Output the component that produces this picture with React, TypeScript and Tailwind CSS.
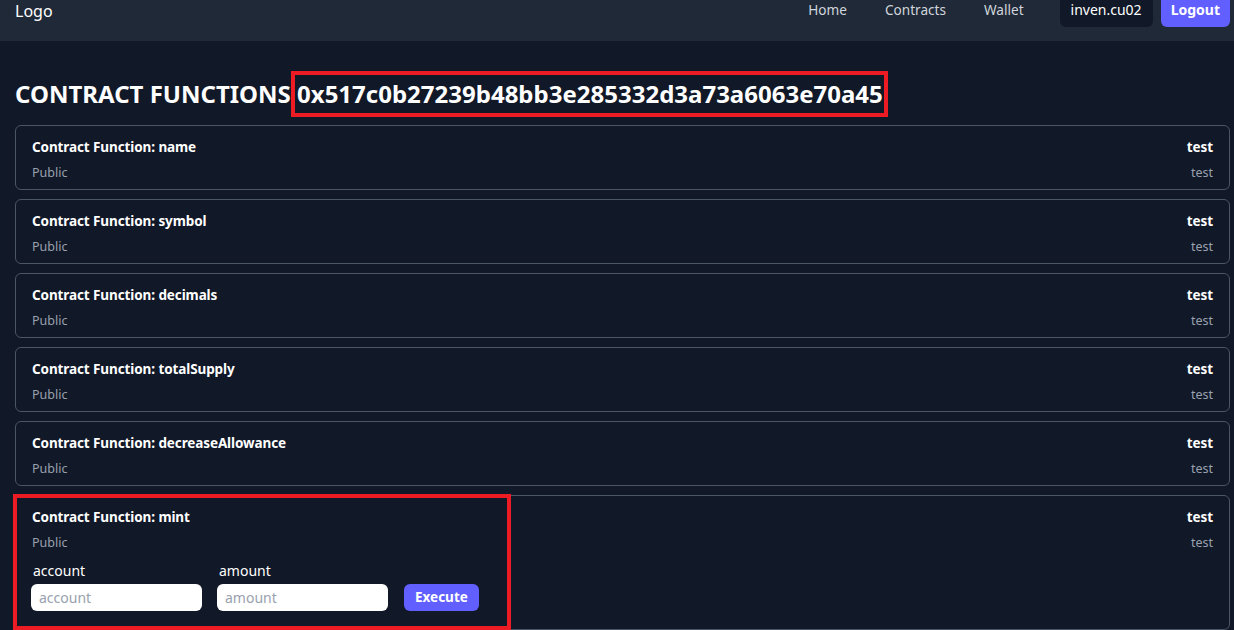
import React from "react";

const functions = ["name", "symbol", "decimals", "totalSupply", "decreaseAllowance"];

function Navbar() {
  return (
    <header className="h-[41px] bg-[#1f2937]">
      <div className="flex items-start justify-between pl-[15px] pr-[4px]">
        <span className="mt-[1px] text-[16px] leading-[20px] text-white">Logo</span>
        <div className="flex items-start">
          <nav className="mr-[36px] flex gap-[38px] text-[13.6px] leading-[20px] text-gray-300">
            <span>Home</span>
            <span>Contracts</span>
            <span>Wallet</span>
          </nav>
          <span className="h-[27px] rounded-b-md bg-[#111827] px-[11px] text-[14px] leading-[20px] text-white">
            inven.cu02
          </span>
          <button className="ml-[8px] flex h-[27px] items-start rounded-b-md bg-indigo-500 px-[10px] text-[14px] font-bold leading-[20px] text-white">
            Logout
          </button>
        </div>
      </div>
    </header>
  );
}

function FunctionCard({ name, children }: { name: string; children?: React.ReactNode }) {
  return (
    <div className="relative rounded-md border border-gray-600 px-[16px] pt-[11px] pb-[6px]">
      <div className="flex justify-between text-[13.5px] font-bold leading-[20px] tracking-[-0.1px] text-white">
        <span>Contract Function: {name}</span>
        <span>test</span>
      </div>
      <div className="mt-[6px] flex justify-between text-[12.5px] leading-[20px] text-gray-400">
        <span>Public</span>
        <span>test</span>
      </div>
      {children}
    </div>
  );
}

export default function App() {
  return (
    <div className="min-h-[630px] bg-[#111827] font-['Noto_Sans','Noto_Sans_CJK_KR',sans-serif]">
      <Navbar />
      <main className="pl-[15px] pr-[4px] pt-[37px]">
        <h1 className="mb-[15px] text-[24px] font-bold leading-[32px] text-white">
          CONTRACT FUNCTIONS{" "}
          <span className="relative">
            0x517c0b27239b48bb3e285332d3a73a6063e70a45
            <span className="absolute -left-[6px] -right-[5px] -top-[6px] -bottom-[7px] border-4 border-[#ed1c24]" />
          </span>
        </h1>
        <div className="flex flex-col gap-[9px]">
          {functions.map((fn) => (
            <FunctionCard key={fn} name={fn} />
          ))}
          <FunctionCard name="mint">
            <div className="mt-[9px] flex items-end gap-[16px] pb-[12px]">
              <label className="flex flex-col text-[14px] leading-[18px] text-white">
                <span className="pl-[1px]">account</span>
                <input
                  placeholder="account"
                  className="-ml-[1px] mt-[4px] h-[27px] w-[171px] rounded-md bg-white px-[8px] text-[14px] text-gray-800 placeholder:text-gray-400"
                />
              </label>
              <label className="flex flex-col text-[14px] leading-[18px] text-white">
                <span className="pl-[1px]">amount</span>
                <input
                  placeholder="amount"
                  className="-ml-[1px] mt-[4px] h-[27px] w-[171px] rounded-md bg-white px-[8px] text-[14px] text-gray-800 placeholder:text-gray-400"
                />
              </label>
              <button className="h-[27px] rounded-md bg-indigo-500 px-[11px] text-[13.5px] font-bold text-white">
                Execute
              </button>
            </div>
            <span className="absolute -left-[3px] -top-[2px] bottom-[-1px] w-[498px] border-4 border-[#ed1c24]" />
          </FunctionCard>
        </div>
      </main>
    </div>
  );
}
